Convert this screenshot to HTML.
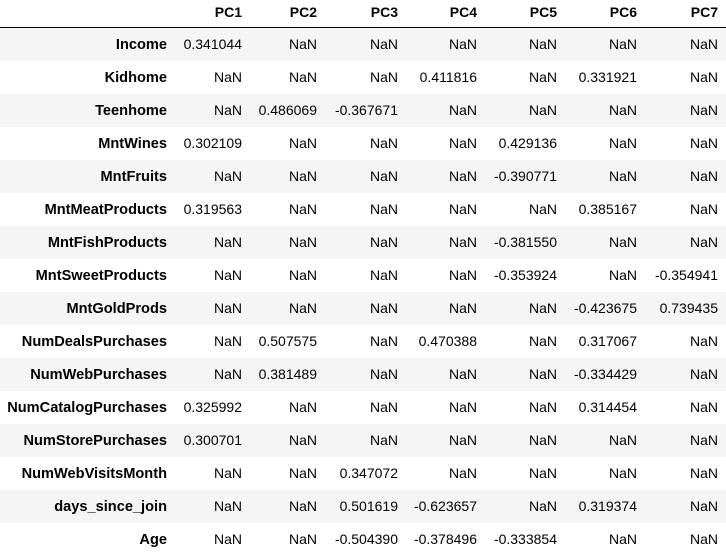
<!DOCTYPE html><html><head><style>
body{margin:0;background:#fff;width:726px;height:555px;overflow:hidden;font-family:"Liberation Sans",Arial,sans-serif;font-size:14px;color:#000}
.r{position:absolute;left:0;width:726px;height:33px}
.r.s{background:#f5f5f5}
.c{position:absolute;top:0;height:33px;line-height:33px;text-align:right;white-space:nowrap}
.h{position:absolute;top:0;left:0;width:726px;height:27px;border-bottom:1.5px solid #000}
.b{font-weight:bold}
.i{font-size:14.6px;top:1px}
</style></head><body>
<div class="h" id="h"></div>
<div id="t"></div>
<script>
var R=[167,242,317,398,477,557,637,718];
var H=["","PC1","PC2","PC3","PC4","PC5","PC6","PC7"];
var D=[
["Income","0.341044","NaN","NaN","NaN","NaN","NaN","NaN"],
["Kidhome","NaN","NaN","NaN","0.411816","NaN","0.331921","NaN"],
["Teenhome","NaN","0.486069","-0.367671","NaN","NaN","NaN","NaN"],
["MntWines","0.302109","NaN","NaN","NaN","0.429136","NaN","NaN"],
["MntFruits","NaN","NaN","NaN","NaN","-0.390771","NaN","NaN"],
["MntMeatProducts","0.319563","NaN","NaN","NaN","NaN","0.385167","NaN"],
["MntFishProducts","NaN","NaN","NaN","NaN","-0.381550","NaN","NaN"],
["MntSweetProducts","NaN","NaN","NaN","NaN","-0.353924","NaN","-0.354941"],
["MntGoldProds","NaN","NaN","NaN","NaN","NaN","-0.423675","0.739435"],
["NumDealsPurchases","NaN","0.507575","NaN","0.470388","NaN","0.317067","NaN"],
["NumWebPurchases","NaN","0.381489","NaN","NaN","NaN","-0.334429","NaN"],
["NumCatalogPurchases","0.325992","NaN","NaN","NaN","NaN","0.314454","NaN"],
["NumStorePurchases","0.300701","NaN","NaN","NaN","NaN","NaN","NaN"],
["NumWebVisitsMonth","NaN","NaN","0.347072","NaN","NaN","NaN","NaN"],
["days_since_join","NaN","NaN","0.501619","-0.623657","NaN","0.319374","NaN"],
["Age","NaN","NaN","-0.504390","-0.378496","-0.333854","NaN","NaN"]];
var s="";
for(var j=1;j<8;j++)s+='<div class="c b" style="right:'+(726-R[j])+'px;line-height:25px">'+H[j]+'</div>';
document.getElementById("h").innerHTML=s;
s="";
for(var i=0;i<D.length;i++){
s+='<div class="r'+(i%2==0?' s':'')+'" style="top:'+(28+33*i)+'px">';
for(var j=0;j<8;j++)s+='<div class="c'+(j==0?' b i':'')+'" style="right:'+(726-R[j])+'px">'+D[i][j]+'</div>';
s+='</div>';}
document.getElementById("t").innerHTML=s;
</script>
</body></html>
